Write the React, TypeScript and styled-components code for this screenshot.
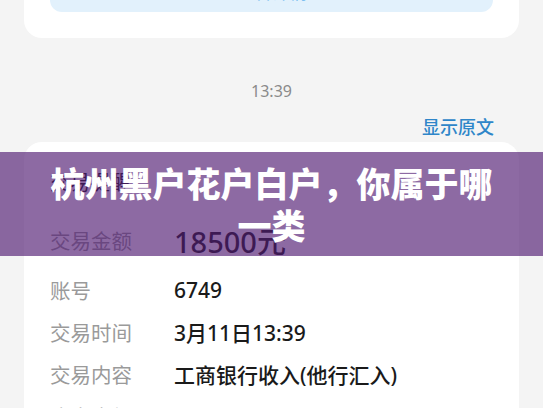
import styled, { createGlobalStyle } from 'styled-components';

const GlobalStyle = createGlobalStyle`
  html, body {
    margin: 0;
    padding: 0;
  }
  body {
    font-family: 'Noto Sans CJK SC', 'Noto Sans', sans-serif;
    background: #f4f4f4;
  }
`;

const Page = styled.div`
  position: relative;
  width: 543px;
  height: 408px;
  overflow: hidden;
  box-sizing: border-box;
  padding: 0 24px;
  background: #f4f4f4;
`;

const TopCard = styled.div`
  height: 38px;
  box-sizing: border-box;
  padding: 0 26px;
  background: #ffffff;
  border-radius: 0 0 18px 18px;
`;

const NoticeBox = styled.div`
  height: 12px;
  overflow: hidden;
  background: #e2f1fc;
  border-radius: 0 0 14px 14px;
  text-align: center;
`;

const NoticeText = styled.div`
  margin-top: -21px;
  font-size: 18px;
  line-height: 24px;
  color: #7cc0f0;
`;

const TimeStamp = styled.div`
  margin-top: 43px;
  text-align: center;
  font-family: 'Noto Sans', 'Noto Sans CJK SC', sans-serif;
  font-size: 16px;
  line-height: 20px;
  color: #8a8a8a;
`;

const ShowOriginal = styled.div`
  margin-top: 13px;
  padding-right: 25px;
  text-align: right;
  font-size: 18px;
  line-height: 24px;
  font-weight: 500;
  color: #2f86c9;
`;

const DetailCard = styled.div`
  margin-top: 4px;
  padding: 19px 24px 0 26px;
  background: #ffffff;
  border-radius: 18px 18px 0 0;
  height: 300px;
`;

const Heading = styled.div`
  height: 42px;
  margin-bottom: 8px;
  font-size: 20px;
  line-height: 42px;
  color: #1a1a1a;
`;

const Row = styled.div<{ $tall?: boolean }>`
  display: grid;
  grid-template-columns: 124px 1fr;
  align-items: center;
  height: ${(p) => (p.$tall ? 58 : 42)}px;
`;

const Label = styled.span`
  font-size: 20.5px;
  color: #9a9a9a;
`;

const Value = styled.span<{ $big?: boolean }>`
  font-family: 'Noto Sans', 'Noto Sans CJK SC', sans-serif;
  font-size: ${(p) => (p.$big ? 29 : 21)}px;
  font-weight: 500;
  color: #1a1a1a;
`;

const TitleBand = styled.div`
  position: absolute;
  top: 152px;
  left: 0;
  right: 0;
  height: 104px;
  box-sizing: border-box;
  padding: 10px 44px;
  background: rgba(80, 26, 113, 0.65);
  text-align: center;
`;

const Title = styled.h1`
  margin: 0;
  font-family: 'Noto Sans CJK SC', sans-serif;
  font-size: 34px;
  line-height: 42px;
  font-weight: 900;
  color: #ffffff;
`;

const rows = [
  { label: '账号', value: '6749' },
  { label: '交易时间', value: '3月11日13:39' },
  { label: '交易内容', value: '工商银行收入(他行汇入)' },
  { label: '账户余额', value: '24710.00元' },
];

export default function App() {
  return (
    <>
      <GlobalStyle />
      <Page>
        <TopCard>
          <NoticeBox>
            <NoticeText>查看详情</NoticeText>
          </NoticeBox>
        </TopCard>

        <TimeStamp>13:39</TimeStamp>
        <ShowOriginal>显示原文</ShowOriginal>

        <DetailCard>
          <Heading>交易提醒</Heading>
          <Row $tall>
            <Label>交易金额</Label>
            <Value $big>18500元</Value>
          </Row>
          {rows.map((row) => (
            <Row key={row.label}>
              <Label>{row.label}</Label>
              <Value>{row.value}</Value>
            </Row>
          ))}
        </DetailCard>

        <TitleBand>
          <Title>杭州黑户花户白户，你属于哪一类</Title>
        </TitleBand>
      </Page>
    </>
  );
}
